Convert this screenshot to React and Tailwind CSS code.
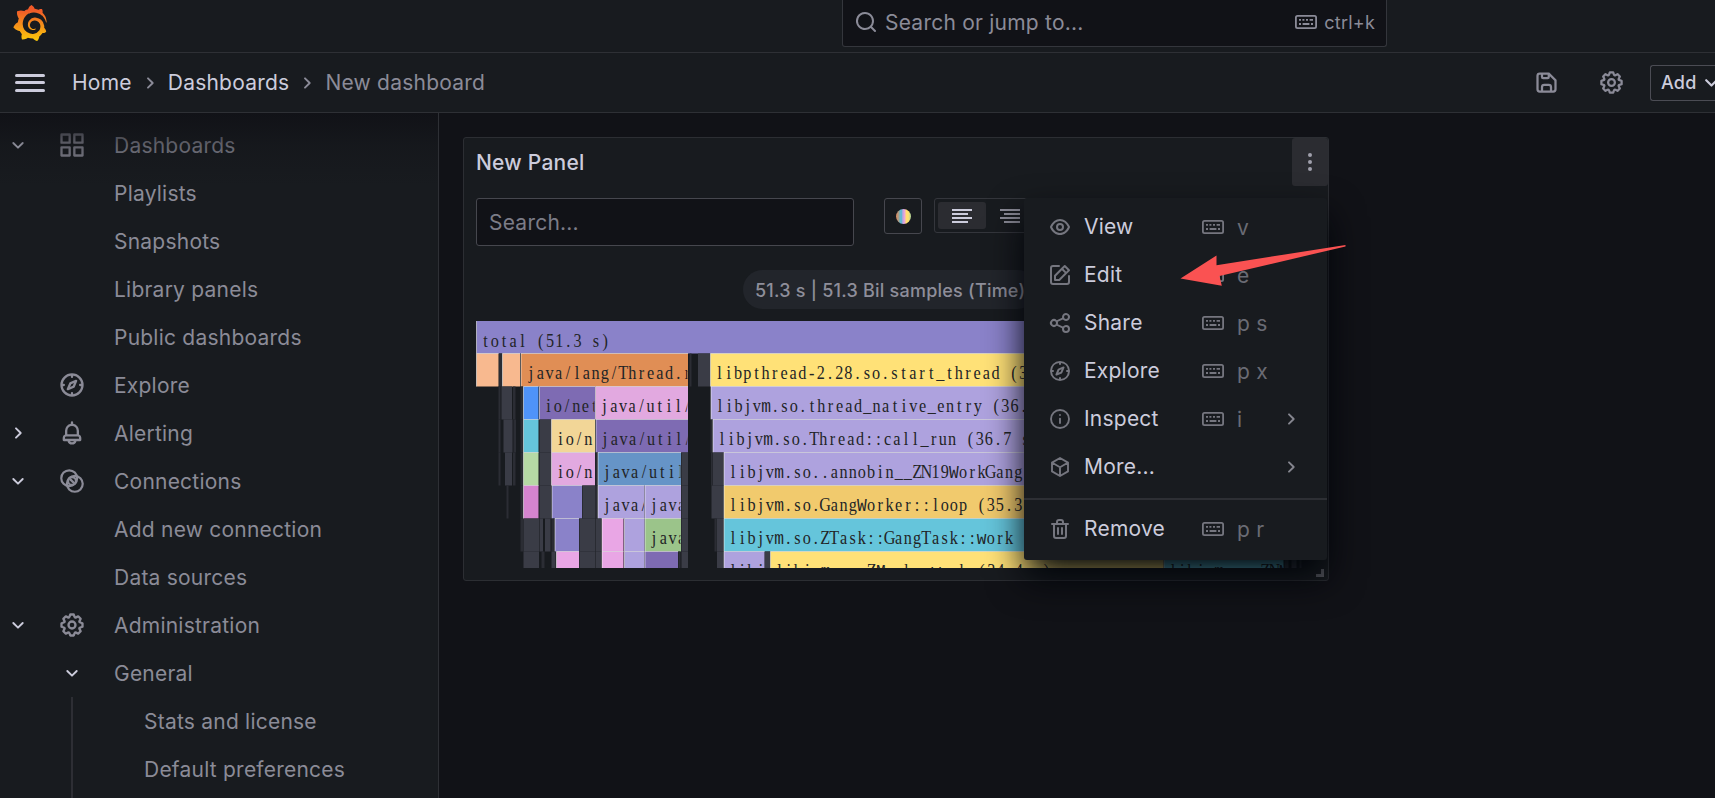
import React from "react";
import { SiGrafana } from "react-icons/si";

const paths = {
  eye: "M21.92,11.6C19.9,6.91,16.1,4,12,4S4.1,6.91,2.08,11.6a1,1,0,0,0,0,.8C4.1,17.09,7.9,20,12,20s7.9-2.91,9.92-7.6A1,1,0,0,0,21.92,11.6ZM12,18c-3.17,0-6.17-2.29-7.9-6C5.83,8.29,8.83,6,12,6s6.17,2.29,7.9,6C18.17,15.71,15.17,18,12,18ZM12,8a4,4,0,1,0,4,4A4,4,0,0,0,12,8Zm0,6a2,2,0,1,1,2-2A2,2,0,0,1,12,14Z",
  edit: "M21,12a1,1,0,0,0-1,1v6a1,1,0,0,1-1,1H5a1,1,0,0,1-1-1V5A1,1,0,0,1,5,4h6a1,1,0,0,0,0-2H5A3,3,0,0,0,2,5V19a3,3,0,0,0,3,3H19a3,3,0,0,0,3-3V13A1,1,0,0,0,21,12ZM6,12.76V17a1,1,0,0,0,1,1h4.24a1,1,0,0,0,.71-.29l6.92-6.93h0L21.71,8a1,1,0,0,0,0-1.42L17.47,2.29a1,1,0,0,0-1.42,0L13.23,5.12h0L6.29,12.05A1,1,0,0,0,6,12.76ZM16.76,4.41l2.83,2.83L18.17,8.66,15.34,5.83ZM8,13.17l5.93-5.93,2.83,2.83L10.83,16H8Z",
  share: "M18,14a4,4,0,0,0-3.08,1.48l-5.1-2.35a3.64,3.64,0,0,0,0-2.26l5.1-2.35A4,4,0,1,0,14,6a4.17,4.17,0,0,0,.07.71L8.79,9.14a4,4,0,1,0,0,5.72l5.28,2.43A4.17,4.17,0,0,0,14,18a4,4,0,1,0,4-4ZM18,4a2,2,0,1,1-2,2A2,2,0,0,1,18,4ZM6,14a2,2,0,1,1,2-2A2,2,0,0,1,6,14Zm12,6a2,2,0,1,1,2-2A2,2,0,0,1,18,20Z",
  compass: "M12,2A10,10,0,1,0,22,12,10,10,0,0,0,12,2Zm1,17.93V19a1,1,0,0,0-2,0v.93A8,8,0,0,1,4.07,13H5a1,1,0,0,0,0-2H4.07A8,8,0,0,1,11,4.07V5a1,1,0,0,0,2,0V4.07A8,8,0,0,1,19.93,11H19a1,1,0,0,0,0,2h.93A8,8,0,0,1,13,19.93ZM15.14,7.55l-5,2.12a1,1,0,0,0-.52.52l-2.12,5a1,1,0,0,0,.21,1.1,1,1,0,0,0,.7.3.93.93,0,0,0,.4-.09l5-2.12a1,1,0,0,0,.52-.52l2.12-5a1,1,0,0,0-1.31-1.31Zm-2.49,5.1-2.28,1,1-2.28,2.28-1Z",
  bell: "M18,13.18V10a6,6,0,0,0-5-5.91V3a1,1,0,0,0-2,0V4.09A6,6,0,0,0,6,10v3.18A3,3,0,0,0,4,16v2a1,1,0,0,0,1,1H8.14a4,4,0,0,0,7.72,0H19a1,1,0,0,0,1-1V16A3,3,0,0,0,18,13.18ZM8,10a4,4,0,0,1,8,0v3H8Zm4,10a2,2,0,0,1-1.72-1h3.44A2,2,0,0,1,12,20Zm6-3H6V16a1,1,0,0,1,1-1H17a1,1,0,0,1,1,1Z",
  apps: "M10,13H3a1,1,0,0,0-1,1v7a1,1,0,0,0,1,1h7a1,1,0,0,0,1-1V14A1,1,0,0,0,10,13ZM9,20H4V15H9ZM21,2H14a1,1,0,0,0-1,1v7a1,1,0,0,0,1,1h7a1,1,0,0,0,1-1V3A1,1,0,0,0,21,2ZM20,9H15V4h5Zm1,4H14a1,1,0,0,0-1,1v7a1,1,0,0,0,1,1h7a1,1,0,0,0,1-1V14A1,1,0,0,0,21,13Zm-1,7H15V15h5ZM10,2H3A1,1,0,0,0,2,3v7a1,1,0,0,0,1,1h7a1,1,0,0,0,1-1V3A1,1,0,0,0,10,2ZM9,9H4V4H9Z",
  cog: "M21.32,9.55l-1.89-.63.89-1.78A1,1,0,0,0,20.13,6L18,3.87a1,1,0,0,0-1.15-.19l-1.78.89-.63-1.89A1,1,0,0,0,13.5,2h-3a1,1,0,0,0-.95.68L8.92,4.57,7.14,3.68A1,1,0,0,0,6,3.87L3.87,6a1,1,0,0,0-.19,1.15l.89,1.78-1.89.63A1,1,0,0,0,2,10.5v3a1,1,0,0,0,.68.95l1.89.63-.89,1.78A1,1,0,0,0,3.87,18L6,20.13a1,1,0,0,0,1.15.19l1.78-.89.63,1.89a1,1,0,0,0,.95.68h3a1,1,0,0,0,.95-.68l.63-1.89,1.78.89A1,1,0,0,0,18,20.13L20.13,18a1,1,0,0,0,.19-1.15l-.89-1.78,1.89-.63A1,1,0,0,0,22,13.5v-3A1,1,0,0,0,21.32,9.55ZM20,12.78l-1.2.4A2,2,0,0,0,17.64,16l.57,1.14-1.1,1.1L16,17.64a2,2,0,0,0-2.79,1.16l-.4,1.2H11.22l-.4-1.2A2,2,0,0,0,8,17.64l-1.14.57-1.1-1.1L6.36,16A2,2,0,0,0,5.2,13.18L4,12.78V11.22l1.2-.4A2,2,0,0,0,6.36,8L5.79,6.89l1.1-1.1L8,6.36A2,2,0,0,0,10.82,5.2l.4-1.2h1.56l.4,1.2A2,2,0,0,0,16,6.36l1.14-.57,1.1,1.1L17.64,8a2,2,0,0,0,1.16,2.79l1.2.4ZM12,8a4,4,0,1,0,4,4A4,4,0,0,0,12,8Zm0,6a2,2,0,1,1,2-2A2,2,0,0,1,12,14Z",
  save: "m20.71 9.29-6-6a1 1 0 0 0-.32-.21A1.09 1.09 0 0 0 14 3H6a3 3 0 0 0-3 3v12a3 3 0 0 0 3 3h12a3 3 0 0 0 3-3v-8a1 1 0 0 0-.29-.71ZM9 5h4v2H9Zm6 14H9v-3a1 1 0 0 1 1-1h4a1 1 0 0 1 1 1Zm4-1a1 1 0 0 1-1 1h-1v-3a3 3 0 0 0-3-3h-4a3 3 0 0 0-3 3v3H6a1 1 0 0 1-1-1V6a1 1 0 0 1 1-1h1v2a2 2 0 0 0 2 2h4a2 2 0 0 0 2-2V6.41l4 4Z",
  trash: "M10,18a1,1,0,0,0,1-1V11a1,1,0,0,0-2,0v6A1,1,0,0,0,10,18ZM20,6H16V5a3,3,0,0,0-3-3H11A3,3,0,0,0,8,5V6H4A1,1,0,0,0,4,8H5V19a3,3,0,0,0,3,3h8a3,3,0,0,0,3-3V8h1a1,1,0,0,0,0-2ZM10,5a1,1,0,0,1,1-1h2a1,1,0,0,1,1,1V6H10Zm7,14a1,1,0,0,1-1,1H8a1,1,0,0,1-1-1V8H17Zm-3-1a1,1,0,0,0,1-1V11a1,1,0,0,0-2,0v6A1,1,0,0,0,14,18Z",
  search: "M21.71,20.29,18,16.61A9,9,0,1,0,16.61,18l3.68,3.68a1,1,0,0,0,1.42,0A1,1,0,0,0,21.71,20.29ZM11,18a7,7,0,1,1,7-7A7,7,0,0,1,11,18Z",
};

const strokes = {
  info: (
    <>
      <circle cx="12" cy="12" r="9" />
      <path d="M12 11.6V16M12 8v.1" />
    </>
  ),
  cube: <path d="M12 3 4 7.6v8.8L12 21l8-4.6V7.6L12 3ZM4.3 7.8 12 12.2l7.7-4.4M12 12.2V21" />,
  connections: (
    <>
      <circle cx="9.6" cy="9.6" r="6.8" />
      <circle cx="14.4" cy="14.4" r="6.8" />
      <circle cx="12" cy="12" r="3.4" />
      <path d="m10.6 10.6 3 3" />
    </>
  ),
  right: <path d="m10 7.3 4.7 4.7L10 16.7" />,
  down: <path d="m7.3 10 4.7 4.7L16.7 10" />,
};

function Icon({ name, className = "size-6" }) {
  if (strokes[name]) {
    return (
      <svg viewBox="0 0 24 24" fill="none" stroke="currentColor" strokeWidth="1.9" strokeLinecap="round" strokeLinejoin="round" className={`shrink-0 ${className}`}>
        {strokes[name]}
      </svg>
    );
  }
  return (
    <svg viewBox="0 0 24 24" fill="currentColor" className={`shrink-0 ${className}`}>
      <path d={paths[name]} />
    </svg>
  );
}

function Keyboard({ className = "" }) {
  return (
    <svg width="22" height="14" viewBox="0 0 22 14" className={`shrink-0 ${className}`}>
      <rect x="0.9" y="0.9" width="20.2" height="12.2" rx="1.6" fill="none" stroke="currentColor" strokeWidth="1.8" />
      <path d="M4 4.9h2M7.4 4.9h2M11 4.9h2M14.6 4.9h3.4M4 9h2M7.6 9h6.8M16 9h2" stroke="currentColor" strokeWidth="1.8" fill="none" />
    </svg>
  );
}

const nav = [
  { label: "Dashboards", icon: "apps", open: true },
  { label: "Playlists" },
  { label: "Snapshots" },
  { label: "Library panels" },
  { label: "Public dashboards" },
  { label: "Explore", icon: "compass" },
  { label: "Alerting", icon: "bell", open: false },
  { label: "Connections", icon: "connections", open: true },
  { label: "Add new connection" },
  { label: "Data sources" },
  { label: "Administration", icon: "cog", open: true },
  { label: "General", group: true },
  { label: "Stats and license", nested: true },
  { label: "Default preferences", nested: true },
  { label: "", nested: true },
];

function NavRow({ item }) {
  return (
    <li className="flex h-12 items-center">
      <span className="flex w-9 justify-center text-[#ccccdc]">
        {item.open !== undefined && <Icon name={item.open ? "down" : "right"} />}
      </span>
      <span className="flex w-[72px] items-center justify-center self-stretch">
        {item.icon && <Icon name={item.icon} className="size-7" />}
        {item.group && <Icon name="down" className="size-6 text-[#ccccdc]" />}
        {item.nested && <span className="h-full w-0.5 bg-[#2d2e34]" />}
      </span>
      <span className={item.nested ? "pl-9" : "pl-1.5"}>{item.label}</span>
    </li>
  );
}

const menu = [
  { label: "View", icon: "eye", keys: "v" },
  { label: "Edit", icon: "edit", keys: "e" },
  { label: "Share", icon: "share", keys: "p s" },
  { label: "Explore", icon: "compass", keys: "p x" },
  { label: "Inspect", icon: "info", keys: "i", sub: true },
  { label: "More...", icon: "cube", sub: true },
];

function MenuRow({ item }) {
  return (
    <div className="flex h-12 items-center pl-6 pr-6 text-[#ccccdc]">
      <Icon name={item.icon} className="size-6 text-[#75767f]" />
      <span className="w-[118px] pb-px pl-3">{item.label}</span>
      {item.keys && (
        <span className="flex items-center gap-[13px] pl-3 text-[#6a6b74]">
          <Keyboard className="text-[#75767f]" />
          {item.keys}
        </span>
      )}
      {item.sub && <Icon name="right" className="ml-auto size-6 text-[#85868f]" />}
    </div>
  );
}

const LAV = "#aea2de";
const VIOLET = "#8a82c9";
const PURPLE = "#7e6bb3";
const PINK = "#e2a9e0";
const ROSE = "#e9a6e5";
const YELLOW = "#ffe177";
const CYAN = "#65c5db";

// Each entry: [start, end, colour, label]; a missing colour marks a collapsed frame.
const flame = [
  [[0, 828, VIOLET, "total (51.3 s)"]],
  [
    [0, 22, "#f8b98f"], [22.5, 25.5], [26, 43.5, "#f8b98f"],
    [44.5, 211.5, "#e08e55", "java/lang/Thread.run"],
    [213, 215], [221.5, 233.5], [234, 828, YELLOW, "libpthread-2.28.so.start_thread (36.8 s)"],
  ],
  [
    [22, 24], [25, 35.5], [36.5, 39], [44, 46.5], [47, 62, "#4f93f9"],
    [63, 118.5, PURPLE, "io/net"], [119, 211.5, PINK, "java/util/"],
    [234.5, 828, LAV, "libjvm.so.thread_native_entry (36.7 s)"],
  ],
  [
    [22, 24], [27, 36], [37, 39.5], [44, 46.5], [47, 62, CYAN], [63, 74.5],
    [75, 118.5, "#f2d697", "io/n"], [119.5, 211.5, PURPLE, "java/util/"],
    [234, 236], [236.5, 828, LAV, "libjvm.so.Thread::call_run (36.7 s)"],
  ],
  [
    [22, 24], [28.5, 35.5], [36.5, 39], [44, 46.5], [47, 62, "#b6d9a5"], [63, 74.5],
    [75, 118.5, PINK, "io/n"], [119, 121], [121.5, 204.5, "#6694c7", "java/util"],
    [205, 211.5], [234.5, 235.8], [236.2, 247],
    [247.5, 828, LAV, "libjvm.so..annobin__ZN19WorkGang"],
  ],
  [
    [30, 32], [44, 46.5], [47, 62, "#d584cf"], [63, 74.5], [75.5, 105.5, VIOLET],
    [106, 119], [119.5, 121], [121.5, 168, LAV, "java/"], [168.5, 204.5, LAV, "java"],
    [205, 211.5], [235, 247], [247.5, 828, "#f1ca6d", "libjvm.so.GangWorker::loop (35.3 s)"],
  ],
  [
    [44, 46.5], [47, 62.5], [63, 66.5], [68.5, 74], [75, 78], [78.5, 102.5, VIOLET], [103, 119], [119.5, 124.5],
    [125.5, 147, ROSE], [148, 168, LAV], [168.5, 204.5, "#9bc48a", "java"],
    [205, 211.5], [238, 240], [240.3, 247], [247.5, 828, CYAN, "libjvm.so.ZTask::GangTask::work"],
  ],
  [
    [47, 62.5], [65, 68], [75, 79], [80, 102.5, ROSE], [103, 119], [119.5, 124.5],
    [125.5, 147, ROSE], [148, 168, LAV], [168.5, 201.5, PURPLE], [202, 204], [205, 211.5],
    [240.5, 247], [247.5, 288, LAV, "libj"], [288.5, 293.5],
    [294, 687, YELLOW, "libjvm.so.ZMark::work (34.4 s)"], [687.5, 807, CYAN, "libjvm.so.ZNM"],
    [808, 812], [815, 820], [823, 825],
  ],
];

const ADVANCE = 9.2;
const SQUEEZE = 0.9;

// Centres of the fixed-pitch cells that the label's characters stand in.
function cells(label) {
  return Array.from(label, (_, i) => (((i + 0.5) * ADVANCE) / SQUEEZE).toFixed(2)).join(" ");
}

// Letters wider than a cell are taken from the narrower monospaced face.
function glyphs(label) {
  return label.split(/([mwMW])/).map((part, i) =>
    i % 2 ? (
      <tspan key={i} fontFamily="'Liberation Mono', monospace">
        {part}
      </tspan>
    ) : (
      part
    )
  );
}

function FlameGraph() {
  return (
    <svg width="830" height="247" viewBox="0 0 830 247" className="block tracking-normal">
      {flame.map((row, r) => {
        const y = r === 0 ? 0 : r * 33 - 0.5;
        const h = r === 0 ? 32.5 : 33;
        return row.map(([a, b, color, label], i) =>
          color ? (
            <g key={`${r}-${i}`}>
              <rect x={a + 0.5} y={y} width={b - a} height={h} fill={color} />
              <path d={`M${a + 0.5} ${y + h}V${y}${r ? `H${a + 0.5 + b - a}` : ""}`} fill="none" stroke="#ffffff" strokeOpacity="0.55" strokeWidth="1" />
              {label && (
                <svg x={a} y={y} width={b - a} height={h} overflow="hidden">
                  <text x={cells(label)} textAnchor="middle" transform={`translate(${a === 44.5 ? 6 : 5} 25.5) scale(${SQUEEZE} 1)`} fontFamily="'Liberation Serif', serif" fontSize="18" fill="#222426">
                    {glyphs(label)}
                  </text>
                </svg>
              )}
            </g>
          ) : (
            <rect key={`${r}-${i}`} x={a + 0.5} y={y} width={b - a} height={h} fill={b - a < 3.2 ? "#2b2d34" : "#3a3c46"} />
          )
        );
      })}
    </svg>
  );
}

export default function App() {
  return (
    <div className="flex h-[798px] w-[1715px] flex-col overflow-hidden bg-[#111217] font-['Inter',sans-serif] text-[21px] leading-[33px] tracking-[0.225px] text-[#ccccdc]">
      <header className="flex h-[53px] shrink-0 border-b border-[#2e3035] bg-[#181b1f]">
        <div className="w-[842px] pl-3 pt-[5px]">
          <svg width="0" height="0" className="block">
            <defs>
              <linearGradient id="flare" x1="0" y1="0" x2="0" y2="1">
                <stop offset="0.15" stopColor="#f05a28" />
                <stop offset="1" stopColor="#fbca0a" />
              </linearGradient>
            </defs>
          </svg>
          <SiGrafana className="size-9" style={{ fill: "url(#flare)" }} />
        </div>
        <div className="flex h-[47px] w-[545px] items-center rounded-b-[3px] border border-t-0 border-[#34363c] bg-[#111217] pb-0.5 pl-[11px] pr-[11px] text-[#8b8b98]">
          <Icon name="search" />
          <span className="pl-[7px]">Search or jump to...</span>
          <span className="ml-auto flex items-center gap-[7px] text-[18px]">
            <Keyboard />
            ctrl+k
          </span>
        </div>
      </header>

      <div className="flex h-[60px] shrink-0 items-center border-b border-[#2e3035] bg-[#181b1f] pl-[15px]">
        <div className="flex w-[57px] flex-col gap-[4.5px]">
          <span className="h-[3px] w-[30px] rounded-sm bg-[#ccccdc]" />
          <span className="h-[3px] w-[30px] rounded-sm bg-[#ccccdc]" />
          <span className="h-[3px] w-[30px] rounded-sm bg-[#ccccdc]" />
        </div>
        <nav className="flex items-center">
          <span>Home</span>
          <Icon name="right" className="mx-[6px] mt-px size-6 text-[#8b8b98]" />
          <span>Dashboards</span>
          <Icon name="right" className="mx-[6px] mt-px size-6 text-[#8b8b98]" />
          <span className="text-[#8b8b98]">New dashboard</span>
        </nav>
        <div className="ml-auto flex items-center text-[#8b8b98]">
          <Icon name="save" className="size-[27px]" />
          <Icon name="cog" className="ml-[38px] mr-[25px] size-[27px]" />
          <div className="flex h-9 w-[65px] items-center overflow-hidden rounded-l-[3px] border border-r-0 border-[#4b4c54] pl-[10px] text-[18px] font-medium text-[#ccccdc]">
            Add
            <Icon name="down" className="ml-px size-[27px]" />
          </div>
        </div>
      </div>

      <div className="flex min-h-0 flex-1">
        <aside className="relative w-[439px] shrink-0 overflow-hidden border-r border-[#2e3035] bg-[#181b1f] pt-2 text-[#8b8b97]">
          <ul>
            {nav.map((item) => (
              <NavRow key={item.label} item={item} />
            ))}
          </ul>
          <div className="absolute inset-x-0 top-0 h-[72px] bg-[linear-gradient(to_bottom,rgba(17,18,23,1)_0%,rgba(17,18,23,0.35)_45%,rgba(17,18,23,0)_100%)]" />
        </aside>

        <main className="p-6">
          <section className="relative h-[444px] w-[866px] rounded-[3px] border border-[#2c2e33] bg-[#181b1f]">
            <div className="flex h-12 items-center justify-between pl-3">
              <h2 className="pt-px font-medium">New Panel</h2>
              <button className="flex h-12 w-9 items-center justify-center rounded-[3px] bg-[#2b2c31] text-[#a0a0ac]">
                <svg width="4" height="18" viewBox="0 0 4 18" fill="currentColor">
                  <circle cx="2" cy="2" r="2" />
                  <circle cx="2" cy="9" r="2" />
                  <circle cx="2" cy="16" r="2" />
                </svg>
              </button>
            </div>
            <div className="flex items-start pl-3 pt-3">
              <div className="flex h-12 w-[378px] items-center rounded-[3px] border border-[#46474e] bg-[#111217] px-3 pt-px text-[#7c7c87]">Search...</div>
              <div className="ml-[30px] flex h-9 w-[38px] items-center justify-center rounded-[3px] border border-[#46474e]">
                <span className="size-[15px] rounded-full bg-[linear-gradient(90deg,#e0875a_0%,#a9a08c_18%,#62b9d0_28%,#62b9d0_38%,#b3a5de_44%,#f0a6d8_58%,#ffdf70_68%,#ffdf70_82%,#a9d19a_100%)]" />
              </div>
              <div className="ml-3 flex h-[35px] w-[104px] items-center rounded-[3px] border border-[#34363c] pl-[3px]">
                <span className="flex h-[27px] w-12 shrink-0 items-center justify-center rounded-[3px] bg-[#2b2c31] text-[#ccccdc]">
                  <svg width="20" height="14" viewBox="0 0 20 14" className="block">
                    <path d="M0 1h20M0 5h16M0 9h20M0 13h16" stroke="currentColor" strokeWidth="2" />
                  </svg>
                </span>
                <span className="flex w-12 shrink-0 items-center justify-center text-[#8b8b97]">
                  <svg width="20" height="14" viewBox="0 0 20 14" className="block">
                    <path d="M0 1h20M4 5h16M0 9h20M4 13h16" stroke="currentColor" strokeWidth="2" />
                  </svg>
                </span>
              </div>
            </div>
            <div className="mt-6 flex h-[39px] pl-[279px]">
              <div className="flex items-center rounded-full bg-[#22252b] px-3 pt-px text-[18px] font-medium text-[#8e8e9a]">51.3 s | 51.3 Bil samples (Time)</div>
            </div>
            <div className="pl-3 pt-3">
              <FlameGraph />
            </div>
            <svg width="8" height="8" viewBox="0 0 8 8" className="absolute bottom-[3px] right-[4px]">
              <path d="M6.5 0V6.5H0" fill="none" stroke="#5b5c63" strokeWidth="3" />
            </svg>

            <div className="absolute left-[560px] top-[60px] w-[303px] rounded-[3px] bg-[#181b1f] pb-[7px] pt-[5px] shadow-[0_18px_36px_#010409]">
              {menu.map((item) => (
                <MenuRow key={item.label} item={item} />
              ))}
              <div className="mb-[5px] mt-[7px] h-0.5 bg-[#2d2f34]" />
              <MenuRow item={{ label: "Remove", icon: "trash", keys: "p r" }} />
            </div>

            <svg width="168" height="44" viewBox="1180 244 168 44" className="absolute left-[716px] top-[106px]">
              <path d="M1180.5 278.5 1216.5 255.5V265.2L1345.5 245V246.5L1219.5 276 1221.8 285.8Z" fill="#fa5252" />
            </svg>
          </section>
        </main>
      </div>
    </div>
  );
}
